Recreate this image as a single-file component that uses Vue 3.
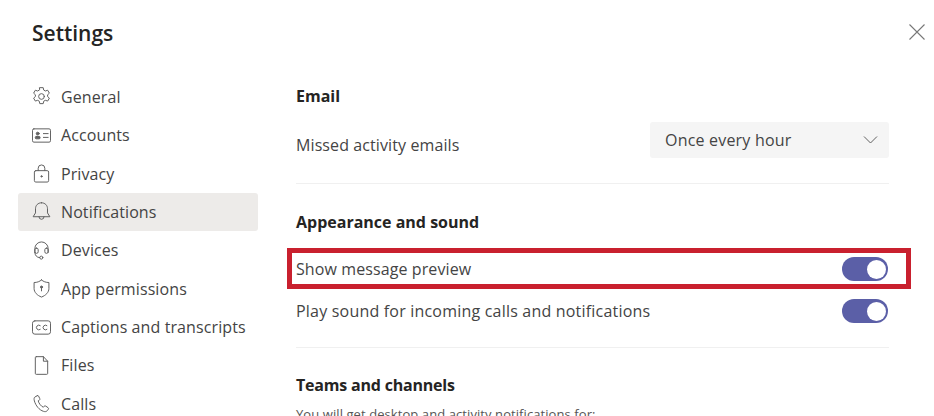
<script setup>
const items = [
  { label: 'General', icon: 'gear' },
  { label: 'Accounts', icon: 'card' },
  { label: 'Privacy', icon: 'lock' },
  { label: 'Notifications', icon: 'bell', active: true },
  { label: 'Devices', icon: 'headset' },
  { label: 'App permissions', icon: 'shield' },
  { label: 'Captions and transcripts', icon: 'cc' },
  { label: 'Files', icon: 'file' },
  { label: 'Calls', icon: 'phone' },
]
</script>

<template>
  <div class="page">
    <aside class="side">
      <h1 class="title">Settings</h1>
      <nav class="nav">
        <div v-for="it in items" :key="it.label" class="item" :class="{ active: it.active }">
          <svg class="ico" viewBox="0 0 20 20" fill="none" stroke="#616161" stroke-width="1.050" stroke-linejoin="round" stroke-linecap="round">
            <template v-if="it.icon === 'gear'">
              <path d="M8.200 0.700h3.600l.5 2.500 1.700 1 2.500-.8 1.800 3.100-1.900 1.700v1.800l1.900 1.700-1.800 3.100-2.500-.8-1.700 1-.5 2.500H8.200l-.5-2.500-1.700-1-2.500.8-1.800-3.100 1.900-1.700V8.200L1.700 6.500l1.800-3.100 2.500.8 1.700-1z" />
              <circle cx="10" cy="10" r="3" />
            </template>
            <template v-else-if="it.icon === 'card'">
              <rect x="0.500" y="3" width="19" height="14" rx="1.500" />
              <circle cx="6" cy="8" r="1.500" fill="#616161" />
              <rect x="3.500" y="11" width="5" height="2.500" rx="1" fill="#616161" />
              <path d="M12 8h5M12 12h5" />
            </template>
            <template v-else-if="it.icon === 'lock'">
              <rect x="2.500" y="7" width="15" height="12" rx="1.500" />
              <path d="M6.500 7V4.500a3.500 3.500 0 0 1 7 0V7" />
              <circle cx="10" cy="13" r="0.700" fill="#616161" />
            </template>
            <template v-else-if="it.icon === 'bell'">
              <path d="M10 0.800c-3.800 0-6.300 2.700-6.300 6.300v4.400l-2.500 4h17.600l-2.500-4V7.100c0-3.600-2.500-6.300-6.300-6.300z" />
              <path d="M7.300 15.500a2.700 2.700 0 0 0 5.400 0" />
            </template>
            <template v-else-if="it.icon === 'headset'">
              <path d="M3 12V8a7 7 0 0 1 14 0v4" />
              <rect x="3" y="7.500" width="3.500" height="5.500" rx="1.700" />
              <rect x="13.500" y="7.500" width="3.500" height="5.500" rx="1.700" />
              <path d="M3 12c0 3 2 5.500 5 5.500" />
              <circle cx="9.800" cy="17.500" r="1.600" />
            </template>
            <template v-else-if="it.icon === 'shield'">
              <path d="M10 1c2 1.800 4.700 2.700 7.800 2.700v6.300c0 4-3.300 7.300-7.800 9-4.500-1.700-7.800-5-7.800-9V3.700C5.300 3.700 8 2.800 10 1z" />
              <circle cx="10" cy="8.500" r="1.100" fill="#616161" />
              <path d="M10 9v3.500" />
            </template>
            <template v-else-if="it.icon === 'cc'">
              <rect x="0.500" y="3" width="19" height="14" rx="2.500" />
              <path d="M8.700 8a2.500 2.500 0 1 0 0 4M15.700 8a2.500 2.500 0 1 0 0 4" />
            </template>
            <template v-else-if="it.icon === 'file'">
              <path d="M4.500 0.700h7.500l4.500 4.800v12.800a1 1 0 0 1-1 1h-11a1 1 0 0 1-1-1V1.700a1 1 0 0 1 1-1z" />
              <path d="M12 0.700v4.800h4.500" />
            </template>
            <template v-else>
              <path d="M5.500 1.800 3 3.200C2 4 2 5.500 2.500 7.300c1.500 5 5 9.500 9.700 11 1.600.5 3 .3 3.800-.7l1.200-1.600c.4-.6.300-1.200-.3-1.600l-2.500-1.700c-.6-.4-1.200-.3-1.600.2l-.8 1c-2.300-.8-4.800-4-5.500-6.700l1.200-.7c.6-.4.800-1 .5-1.600L6.900 2.200c-.3-.6-.9-.7-1.400-.4z" />
            </template>
          </svg>
          <span>{{ it.label }}</span>
        </div>
      </nav>
    </aside>

    <main class="main">
      <h2 class="heading first">Email</h2>
      <div class="row email">
        <span class="low">Missed activity emails</span>
        <div class="select">
          <span>Once every hour</span>
          <svg class="chev" viewBox="0 0 14 8" fill="none" stroke="#616161" stroke-width="1"><path d="M0.500 0.500 7 7l6.500-6.500" /></svg>
        </div>
      </div>
      <div class="rule" />
      <h2 class="heading tight">Appearance and sound</h2>
      <div class="row toggle-row highlighted">
        <span>Show message preview</span>
        <span class="toggle"><i /></span>
      </div>
      <div class="row toggle-row">
        <span class="wide">Play sound for incoming calls and notifications</span>
        <span class="toggle"><i /></span>
      </div>
      <div class="rule second" />
      <h2 class="heading last">Teams and channels</h2>
      <p class="sub">You will get desktop and activity notifications for:</p>
    </main>

    <svg class="close" viewBox="0 0 16 16" fill="none" stroke="#777" stroke-width="1.100"><path d="M0.500 0.500l15 15M15.500 0.500l-15 15" /></svg>
  </div>
</template>

<style scoped>
.page {
  position: relative;
  width: 934px;
  height: 416px;
  overflow: hidden;
  background: #fff;
  display: flex;
  font-family: "Open Sans", sans-serif;
  color: #252423;
}
.side {
  width: 240px;
  margin-left: 18px;
  flex: none;
}
.title {
  margin: 18px 0 0 14px;
  font-size: 21px;
  line-height: 30px;
  font-weight: 600;
  color: #242424;
}
.nav {
  margin-top: 29.600px;
}
.item {
  height: 38.375px;
  display: flex;
  align-items: center;
  gap: 10px;
  padding-left: 14px;
  font-size: 16px;
  letter-spacing: 0.100px;
  color: #444;
}
.item.active {
  background: #edebe9;
  border-radius: 3px;
}
.ico {
  width: 19px;
  height: 19px;
  flex: none;
}
.main {
  margin-left: 38px;
  width: 593px;
  flex: none;
}
.heading {
  margin: 27px 0 0;
  font-size: 16px;
  line-height: 24px;
  font-weight: 700;
  color: #252423;
}
.heading.first {
  margin-top: 84px;
}
.heading.tight {
  margin-top: 26px;
}
.heading.last {
  margin-top: 25px;
  letter-spacing: -0.200px;
}
.row {
  display: flex;
  align-items: center;
  justify-content: space-between;
  font-size: 16px;
  letter-spacing: 0.100px;
  color: #444;
}
.email {
  height: 36px;
  margin-top: 14px;
}
.low {
  margin-top: 10px;
}
.wide {
  letter-spacing: 0.200px;
}
.select {
  width: 239px;
  height: 36px;
  box-sizing: border-box;
  padding: 0 11px 0 15px;
  display: flex;
  align-items: center;
  justify-content: space-between;
  background: #f5f5f5;
  border-radius: 3px;
  letter-spacing: 0.200px;
}
.chev {
  width: 15px;
  height: 8px;
}
.rule {
  height: 1px;
  background: #f0f0f0;
  margin-top: 25px;
}
.rule.second {
  margin-top: 15px;
}
.toggle-row {
  height: 42px;
  padding-right: 1px;
}
.highlighted {
  position: relative;
  margin-top: 14px;
}
.highlighted::after {
  content: "";
  position: absolute;
  left: -9px;
  right: -22px;
  top: 0;
  bottom: 1px;
  border: 5px solid #c9202e;
  pointer-events: none;
}
.toggle {
  width: 46px;
  height: 24px;
  box-sizing: border-box;
  border-radius: 12px;
  background: #5b5fa7;
  display: flex;
  align-items: center;
  justify-content: flex-end;
  padding-right: 2px;
}
.toggle i {
  width: 19px;
  height: 19px;
  border-radius: 50%;
  background: #fff;
}
.sub {
  margin: 8px 0 0;
  font-size: 13px;
  line-height: 18px;
  letter-spacing: 0.080px;
  color: #555;
}
.close {
  position: absolute;
  top: 24px;
  left: 909px;
  width: 16px;
  height: 16px;
}
</style>
